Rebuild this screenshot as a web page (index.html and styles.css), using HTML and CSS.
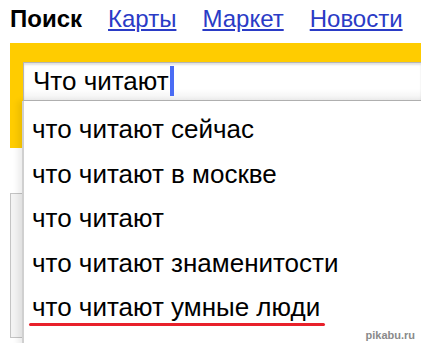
FILE: index.html
```html
<!DOCTYPE html>
<html lang="ru">
<head>
    <meta charset="UTF-8">
    <meta name="viewport" content="width=device-width, initial-scale=1.0">
    <title>Поиск</title>
    <link rel="stylesheet" href="styles.css">
</head>
<body>
    <nav class="tabs">
        <span class="tab current">Поиск</span>
        <a class="tab" href="#">Карты</a>
        <a class="tab" href="#">Маркет</a>
        <a class="tab" href="#">Новости</a>
    </nav>

    <div class="search">
        <div class="arrow">
            <div class="field">Что читают<span class="caret"></span></div>
        </div>
        <div class="under"></div>

        <ul class="suggest">
            <li>что читают сейчас</li>
            <li>что читают в москве</li>
            <li>что читают</li>
            <li>что читают знаменитости</li>
            <li><span class="marked">что читают умные люди</span></li>
        </ul>
    </div>

    <div class="watermark">pikabu.ru</div>
</body>
</html>
```

FILE: styles.css
```css
body {
    margin: 0;
    background: #fff;
    font-family: Arial, "Liberation Sans", sans-serif;
    color: #000;
    width: 421px;
    height: 343px;
    overflow: hidden;
    position: relative;
}

.tabs {
    display: flex;
    height: 43px;
    box-sizing: border-box;
    padding: 5px 0 0 10px;
    font-size: 24px;
    line-height: 28px;
    white-space: nowrap;
}

.tab {
    margin-right: 26px;
    color: #2a3bc6;
    text-decoration: underline;
    text-underline-offset: 2px;
}

.tab.current {
    color: #000;
    font-weight: bold;
    text-decoration: none;
}

.search {
    position: relative;
}

.arrow {
    margin-left: 10px;
    height: 105px;
    box-sizing: border-box;
    padding: 19px 0 0 13px;
    background: #ffcc00;
}

.field {
    height: 39px;
    box-sizing: border-box;
    padding-left: 9px;
    border: 1px solid #b5b5b5;
    border-right: none;
    background: linear-gradient(#fff 70%, #f1f1f1);
    box-shadow: inset 0 2px 2px rgba(0, 0, 0, 0.12);
    font-size: 26px;
    line-height: 37px;
    white-space: nowrap;
}

.caret {
    display: inline-block;
    width: 4px;
    height: 30px;
    margin-left: 1px;
    vertical-align: -6px;
    background: #4a6cf4;
}

.under {
    margin: 45px 0 0 10px;
    width: 300px;
    height: 145px;
    box-sizing: border-box;
    border: 1px solid #c4c4c4;
    background: #f3f3f3;
}

.suggest {
    position: absolute;
    left: 22px;
    top: 58px;
    right: -10px;
    height: 240px;
    margin: 0;
    padding: 6px 0 0 8px;
    list-style: none;
    background: #fff;
    border-left: 2px solid #d0d0d0;
    box-shadow: -4px 0 6px rgba(0, 0, 0, 0.08);
    font-size: 26px;
    line-height: 44.5px;
    white-space: nowrap;
}

.marked {
    position: relative;
}

.marked::after {
    content: "";
    position: absolute;
    left: -3px;
    right: -5px;
    bottom: -4px;
    height: 3px;
    border-radius: 2px;
    background: #e8202a;
}

.watermark {
    position: absolute;
    right: 6px;
    bottom: 2px;
    font-size: 11px;
    font-weight: bold;
    color: #8a8a8a;
    text-shadow: 0 0 1px #fff;
}
```
